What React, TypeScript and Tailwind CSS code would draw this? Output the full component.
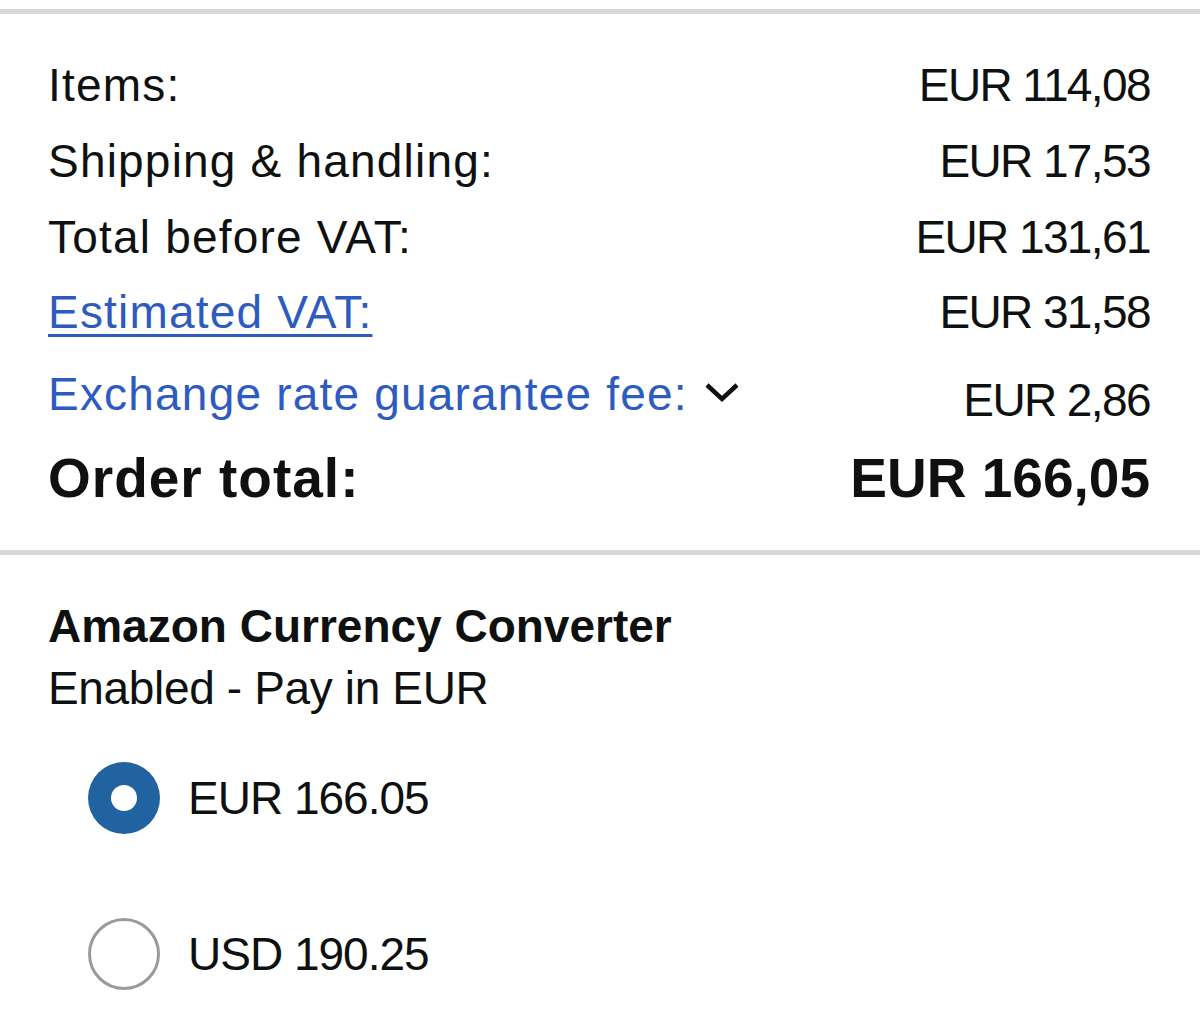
import React, { useState } from 'react';

const rows = [
  { label: 'Items:', value: 'EUR 114,08', h: 'h-[76px]' },
  { label: 'Shipping & handling:', value: 'EUR 17,53', h: 'h-[76px]' },
  { label: 'Total before VAT:', value: 'EUR 131,61', h: 'h-[75px]' },
];

const Radio = ({ checked }: { checked: boolean }) =>
  checked ? (
    <span className="w-[72px] h-[72px] rounded-full bg-[#2162a1] flex items-center justify-center">
      <span className="w-[26px] h-[26px] rounded-full bg-white" />
    </span>
  ) : (
    <span className="w-[72px] h-[72px] rounded-full border-[3px] border-[#9a9a9a] bg-white" />
  );

const App = () => {
  const [currency, setCurrency] = useState('EUR');

  return (
    <div className="w-[1200px] min-h-[1017px] bg-white text-[#0f1111] font-['Liberation_Sans',Arial,sans-serif] pt-[9px]">
      <div className="border-t-[5px] border-[#d5d9d9] pt-[34px] pb-[32px] pl-[48px] pr-[50px]">
        {rows.map((r) => (
          <div key={r.label} className={`flex justify-between text-[46px] leading-[75px] ${r.h}`}>
            <span className="tracking-[1.2px]">{r.label}</span>
            <span className="tracking-[-1.6px]">{r.value}</span>
          </div>
        ))}
        <div className="flex justify-between text-[46px] leading-[75px] h-[82px]">
          <a href="#" className="text-[#2e5bbf] tracking-[1.2px] underline decoration-[3px] underline-offset-[6px]">
            Estimated VAT:
          </a>
          <span className="tracking-[-1.6px]">EUR 31,58</span>
        </div>
        <div className="flex justify-between items-start text-[46px] leading-[75px] h-[81px]">
          <span className="flex items-center text-[#2e5bbf] tracking-[1.2px]">
            Exchange rate guarantee fee:
            <svg className="ml-[16px] -mt-[6px]" width="36" height="22" viewBox="0 0 36 22" fill="none">
              <path d="M3 4 L18 18 L33 4" stroke="#0f1111" strokeWidth="4.5" />
            </svg>
          </span>
          <span className="mt-[6px] tracking-[-1.6px]">EUR 2,86</span>
        </div>
        <div className="flex justify-between text-[55px] leading-[80px] font-bold">
          <span className="tracking-[1px]">Order total:</span>
          <span>EUR 166,05</span>
        </div>
      </div>

      <div className="border-t-[5px] border-[#d5d9d9] pt-[40px] pl-[48px]">
        <div className="text-[46px] leading-[62px] font-bold">Amazon Currency Converter</div>
        <div className="text-[46px] leading-[62px] tracking-[-0.35px]">Enabled - Pay in EUR</div>
        <div className="pl-[40px] pt-[43px] flex flex-col gap-[84px]">
          {[
            { id: 'EUR', text: 'EUR 166.05' },
            { id: 'USD', text: 'USD 190.25' },
          ].map((o) => (
            <button
              key={o.id}
              onClick={() => setCurrency(o.id)}
              className="flex items-center gap-[28px] text-[46px] leading-[72px] text-left"
            >
              <Radio checked={currency === o.id} />
              <span className="tracking-[-1px]">{o.text}</span>
            </button>
          ))}
        </div>
      </div>
    </div>
  );
};

export default App;
